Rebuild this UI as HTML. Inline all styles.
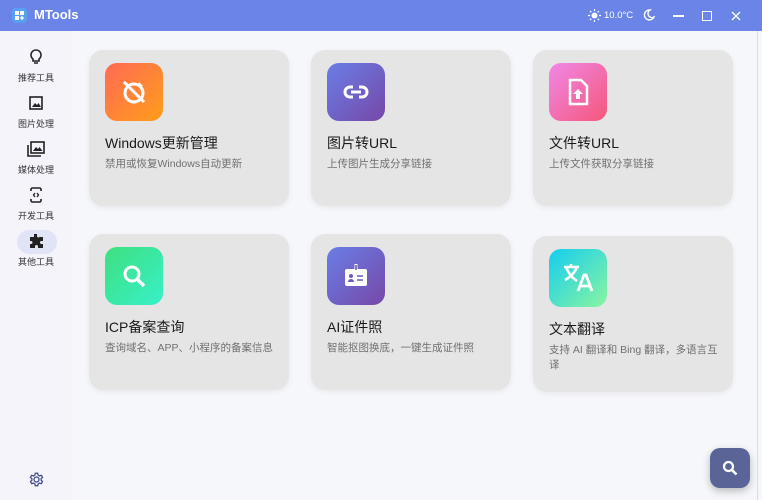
<!DOCTYPE html>
<html><head><meta charset="utf-8"><style>
*{margin:0;padding:0;box-sizing:border-box}
body{width:762px;height:500px;overflow:hidden;background:#f6f7fa;font-family:"Liberation Sans","Noto Sans CJK SC",sans-serif;position:relative}
.tb{position:absolute;left:0;top:0;width:762px;height:31px;background:#6b84e8;color:#fff}
.logo{position:absolute;left:12px;top:8px;width:15px;height:15px;border-radius:4px;background:#5aa0f0}
.tb .t{position:absolute;left:34px;top:7px;font-size:13px;font-weight:bold}
.side{position:absolute;left:0;top:31px;width:72px;height:469px;background:#f5f4fb}
.item{position:absolute;left:0;width:72px;text-align:center;font-size:9px;color:#333;line-height:11px}
.item svg{display:block;margin:0 auto 8px}
.act{position:absolute;left:17px;top:199px;width:40px;height:24px;border-radius:12px;background:#e1e3f6}
.card{position:absolute;width:200px;height:156px;background:#e5e5e6;border-radius:14px;box-shadow:0 2px 6px rgba(0,0,0,.06)}
.ic{position:absolute;left:16px;top:13px;width:58px;height:58px;border-radius:12px;display:flex;align-items:center;justify-content:center}
.ct{position:absolute;left:16px;top:83px;font-size:14px;color:#1a1a1a}
.cd{position:absolute;left:16px;top:107px;width:180px;font-size:10.5px;color:#707070;line-height:15px}
.fab{position:absolute;left:710px;top:448px;width:40px;height:40px;border-radius:10px;background:#5a6496;box-shadow:0 3px 8px rgba(0,0,0,.25);display:flex;align-items:center;justify-content:center}
</style></head><body>
<div class="tb">
<div class="logo"><svg width="15" height="15" viewBox="0 0 15 15"><rect x="3" y="3" width="4" height="4" fill="#fff"/><rect x="8" y="3" width="4" height="4" fill="#fff"/><rect x="3" y="8" width="4" height="4" fill="#fff"/><path d="M8 10h4M10 8v4" stroke="#fff" stroke-width="1.3"/></svg></div>
<div class="t">MTools</div>
<svg style="position:absolute;left:588px;top:9px" width="13" height="13" viewBox="0 0 13 13"><circle cx="6.5" cy="6.5" r="3" fill="#fff"/><g stroke="#fff" stroke-width="1.2"><path d="M6.5 0v2M6.5 11v2M0 6.5h2M11 6.5h2M2 2l1.3 1.3M9.7 9.7L11 11M2 11l1.3-1.3M9.7 3.3L11 2"/></g></svg>
<div style="position:absolute;left:604px;top:10px;font-size:9.5px">10.0°C</div>
<svg style="position:absolute;left:643px;top:9px" width="12" height="12" viewBox="0 0 12 12"><path d="M7 1a5 5 0 1 0 4 7A4 4 0 0 1 7 1z" fill="none" stroke="#fff" stroke-width="1.4"/></svg>
<div style="position:absolute;left:673px;top:15px;width:11px;height:1.5px;background:#fff"></div>
<div style="position:absolute;left:702px;top:11px;width:10px;height:10px;border:1.5px solid #fff"></div>
<svg style="position:absolute;left:731px;top:11px" width="10" height="10" viewBox="0 0 10 10"><path d="M1 1l8 8M9 1L1 9" stroke="#fff" stroke-width="1.5"/></svg>
</div>
<div class="side">
<div class="act"></div>
<div class="item" style="top:18px"><svg width="14" height="16" viewBox="0 0 14 16"><path d="M7 1a5 5 0 0 0-3 9v2h6v-2a5 5 0 0 0-3-9zM5 14h4" fill="none" stroke="#222" stroke-width="1.6"/></svg>推荐工具</div>
<div class="item" style="top:64px"><svg width="14" height="16" viewBox="0 0 14 16"><rect x="1" y="2" width="12" height="12" fill="none" stroke="#222" stroke-width="1.6"/><path d="M3 12l3-4 2 2 1.5-2L12 12z" fill="#222"/></svg>图片处理</div>
<div class="item" style="top:110px"><svg width="18" height="16" viewBox="0 0 18 16"><rect x="4" y="1" width="13" height="11" fill="none" stroke="#222" stroke-width="1.6"/><path d="M1 4v11h13" fill="none" stroke="#222" stroke-width="1.6"/><path d="M6 10l3-4 2 2 1.5-2 3 4z" fill="#222"/></svg>媒体处理</div>
<div class="item" style="top:156px"><svg width="14" height="16" viewBox="0 0 14 16"><rect x="2" y="1" width="10" height="14" rx="1.5" fill="none" stroke="#222" stroke-width="1.6"/><rect x="1" y="4" width="12" height="8" fill="#f5f4fb"/><path d="M6 6L4.5 8 6 10M8 6l1.5 2L8 10" fill="none" stroke="#222" stroke-width="1.3"/></svg>开发工具</div>
<div class="item" style="top:202px"><svg width="16" height="16" viewBox="0 0 16 16"><path d="M6 1h3v2a1.5 1.5 0 0 0 3 0V4h3v4h-1.5a1.5 1.5 0 0 0 0 3H15v4H10v-1.5a1.5 1.5 0 0 0-3 0V15H2v-4h1a1.5 1.5 0 0 0 0-3H2V4h4z" fill="#222"/></svg>其他工具</div>
<svg style="position:absolute;left:29px;top:441px" width="15" height="15" viewBox="0 0 24 24"><path d="M12 8a4 4 0 1 0 0 8 4 4 0 0 0 0-8zM10 2h4l.6 3 2.2 1.3 2.9-1 2 3.4-2.3 2v2.6l2.3 2-2 3.4-2.9-1-2.2 1.3-.6 3h-4l-.6-3-2.2-1.3-2.9 1-2-3.4 2.3-2v-2.6l-2.3-2 2-3.4 2.9 1L9.4 5z" fill="none" stroke="#3f4a8a" stroke-width="2"/></svg>
</div>

<div class="card" style="left:89px;top:50px"><div class="ic" style="background:linear-gradient(135deg,#ff6a55,#ff9d1a)"><svg width="30" height="30" viewBox="0 0 30 30"><circle cx="15" cy="16" r="9" fill="none" stroke="#fff" stroke-width="3"/><path d="M20 5l4 4-5 1" fill="#fff"/><path d="M5 5l20 20" stroke="#fff" stroke-width="3"/></svg></div><div class="ct">Windows更新管理</div><div class="cd">禁用或恢复Windows自动更新</div></div>
<div class="card" style="left:311px;top:50px"><div class="ic" style="background:linear-gradient(135deg,#6a7ee6,#7648a8)"><svg width="30" height="30" viewBox="0 0 30 30"><path d="M12 10H9a5 5 0 0 0 0 10h3M18 10h3a5 5 0 0 1 0 10h-3M10 15h10" fill="none" stroke="#fff" stroke-width="3"/></svg></div><div class="ct">图片转URL</div><div class="cd">上传图片生成分享链接</div></div>
<div class="card" style="left:533px;top:50px"><div class="ic" style="background:linear-gradient(135deg,#f088e8,#f5577a)"><svg width="30" height="30" viewBox="0 0 30 30"><path d="M7 3h11l6 6v18H7z" fill="none" stroke="#fff" stroke-width="2.5"/><path d="M15 12l-5 5h3v5h4v-5h3z" fill="#fff"/></svg></div><div class="ct">文件转URL</div><div class="cd">上传文件获取分享链接</div></div>

<div class="card" style="left:89px;top:234px"><div class="ic" style="background:linear-gradient(135deg,#3ee07f,#38f0c8)"><svg width="30" height="30" viewBox="0 0 30 30"><circle cx="13" cy="13" r="7" fill="none" stroke="#fff" stroke-width="3"/><path d="M18 18l7 7" stroke="#fff" stroke-width="3.5"/></svg></div><div class="ct">ICP备案查询</div><div class="cd">查询域名、APP、小程序的备案信息</div></div>
<div class="card" style="left:311px;top:234px"><div class="ic" style="background:linear-gradient(135deg,#6a7ee6,#7648a8)"><svg width="30" height="30" viewBox="0 0 30 30"><rect x="4" y="8" width="22" height="17" rx="2" fill="#fff"/><rect x="13.5" y="3" width="3" height="8" fill="#fff"/><rect x="14.2" y="4" width="1.6" height="5" fill="#6d5bbf"/><circle cx="10" cy="15" r="2" fill="#6d5bbf"/><path d="M7 21a3 3 0 0 1 6 0z" fill="#6d5bbf"/><path d="M16 15h6M16 19h6" stroke="#6d5bbf" stroke-width="1.6"/></svg></div><div class="ct">AI证件照</div><div class="cd">智能抠图换底，一键生成证件照</div></div>
<div class="card" style="left:533px;top:236px"><div class="ic" style="background:linear-gradient(135deg,#14cdf0,#8af5a0)"><svg width="34" height="34" viewBox="0 0 34 34"><path d="M3 6h15M10 3v3M5 6q4 10 11 14M16 6q-3 8-12 13" fill="none" stroke="#fff" stroke-width="2.6"/><path d="M17 30l6-16h2l6 16M19.5 25h9" fill="none" stroke="#fff" stroke-width="2.8"/></svg></div><div class="ct">文本翻译</div><div class="cd" style="width:176px">支持 AI 翻译和 Bing 翻译，多语言互译</div></div>

<div class="fab"><svg width="18" height="18" viewBox="0 0 18 18"><circle cx="7.5" cy="7.5" r="4.5" fill="none" stroke="#fff" stroke-width="2.2"/><path d="M11 11l4.5 4.5" stroke="#fff" stroke-width="2.6"/></svg></div>
<div style="position:absolute;left:757px;top:31px;width:1px;height:469px;background:#ddd"></div>
</body></html>
